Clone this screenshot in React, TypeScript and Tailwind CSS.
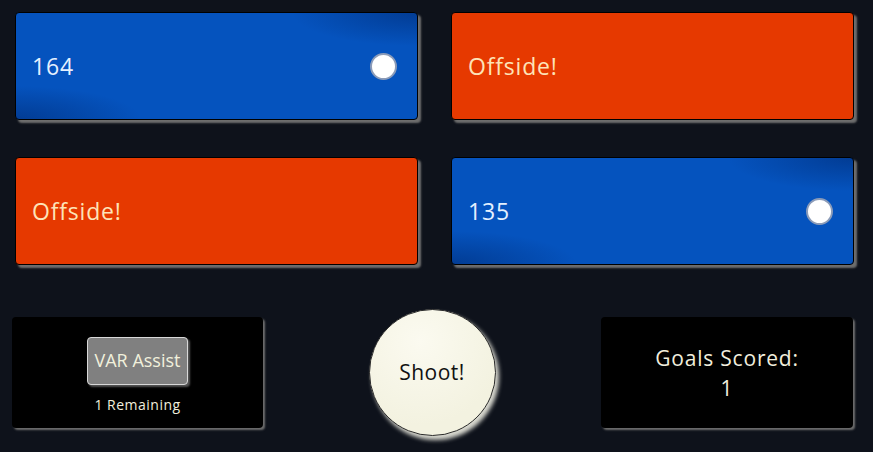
import React, { useState } from "react";

interface ChoiceCardProps {
  value: string;
  offside: boolean;
}

const ChoiceCard: React.FC<ChoiceCardProps> = ({ value, offside }) => {
  if (offside) {
    return (
      <div className="h-[108px] flex items-center px-4 rounded-[4px] border border-black bg-[#e63900] shadow-[3px_3px_2px_#6e6e6e]">
        <span className="text-[23px] text-[#fde4b8] tracking-[0.8px]">Offside!</span>
      </div>
    );
  }
  return (
    <div className="h-[108px] flex items-center justify-between pl-4 pr-[20px] rounded-[4px] border border-black bg-[#0553be] bg-[radial-gradient(ellipse_at_top_right,#023c94_0%,transparent_22%),radial-gradient(ellipse_at_bottom_left,#023c94_0%,transparent_22%)] shadow-[3px_3px_2px_#6e6e6e]">
      <span className="text-[23px] text-[#e4f0ff] tracking-[0.8px]">{value}</span>
      <span className="w-[27px] h-[27px] rounded-full bg-white border-2 border-[#8b9bb8]" />
    </div>
  );
};

const App: React.FC = () => {
  const [goals] = useState(1);
  const [remaining] = useState(1);

  return (
    <div
      className="min-h-screen bg-[#0e121b] pl-[15px] pr-[19px] pt-[12px]"
      style={{ fontFamily: "'Open Sans', Lato, sans-serif" }}
    >
      <div className="grid grid-cols-2 gap-x-[33px] gap-y-[37px]">
        <ChoiceCard value="164" offside={false} />
        <ChoiceCard value="" offside={true} />
        <ChoiceCard value="" offside={true} />
        <ChoiceCard value="135" offside={false} />
      </div>

      <div className="flex items-center justify-between -ml-[3px] mr-[1px] mt-[44px]">
        <div className="w-[251px] h-[111px] rounded-[4px] bg-black shadow-[2px_2px_2px_#6e6e6e] flex flex-col items-center justify-center gap-[9px] pt-[6px]">
          <button className="px-[7px] h-[48px] rounded-[4px] bg-[#808080] border border-[#d8d8d8] shadow-[2px_2px_2px_#555] text-[18px] text-[#f1f0dc]">
            VAR Assist
          </button>
          <span className="text-[14px] text-[#f1eedd] tracking-[0.5px]">{remaining} Remaining</span>
        </div>

        <button className="w-[127px] h-[127px] rounded-full border border-[#2a2a2a] bg-[#f5f4e4] bg-[radial-gradient(circle_at_40%_25%,#fbfaf0_0%,#f3f2e0_70%)] shadow-[3px_4px_4px_#d9d9d0] text-[21px] text-[#111] tracking-[0.5px]">
          Shoot!
        </button>

        <div className="w-[252px] h-[111px] rounded-[4px] bg-black shadow-[2px_2px_2px_#6e6e6e] flex flex-col items-center justify-center leading-[30px] text-[21px] text-[#f1eedd] tracking-[0.8px]">
          <span>Goals Scored:</span>
          <span>{goals}</span>
        </div>
      </div>
    </div>
  );
};

export default App;
